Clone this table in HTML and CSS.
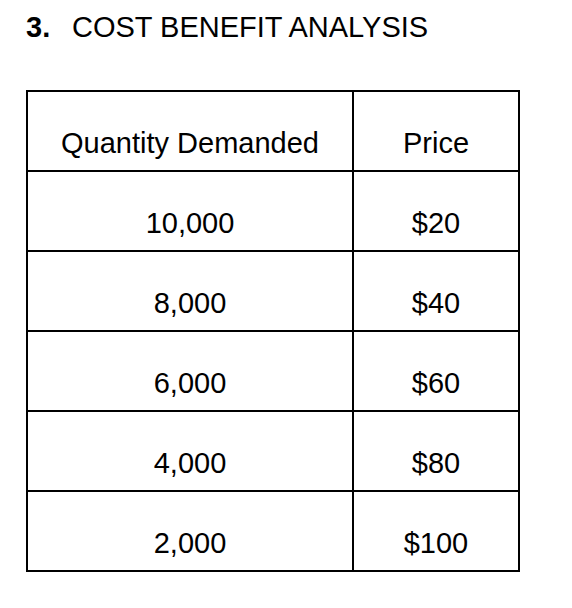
FILE: index.html
```html
<!DOCTYPE html>
<html lang="en">
<head>
<meta charset="utf-8">
<title>Cost Benefit Analysis</title>
<link rel="stylesheet" href="styles.css">
</head>
<body>
<div class="page">
  <h1 class="title"><span class="num">3.</span>COST BENEFIT ANALYSIS</h1>
  <table class="grid">
    <tr><td class="c1">Quantity Demanded</td><td class="c2">Price</td></tr>
    <tr><td class="c1">10,000</td><td class="c2">$20</td></tr>
    <tr><td class="c1">8,000</td><td class="c2">$40</td></tr>
    <tr><td class="c1">6,000</td><td class="c2">$60</td></tr>
    <tr><td class="c1">4,000</td><td class="c2">$80</td></tr>
    <tr><td class="c1">2,000</td><td class="c2">$100</td></tr>
  </table>
</div>
</body>
</html>
```

FILE: styles.css
```css
html, body {
  margin: 0;
  padding: 0;
  background: #ffffff;
}

body {
  font-family: "Liberation Sans", Arial, sans-serif;
  color: #000000;
  font-size: 29px;
}

.page {
  padding: 11px 0 0 26px;
}

.title {
  margin: 0;
  font-size: 29px;
  font-weight: normal;
  line-height: 32px;
  white-space: nowrap;
}

.num {
  display: inline-block;
  width: 46px;
  font-weight: bold;
}

.grid {
  margin-top: 47px;
  border-collapse: separate;
  border-spacing: 0;
  border: 2px solid #000000;
}

.grid td {
  padding: 35px 0 11px;
  line-height: 32px;
  text-align: center;
  vertical-align: top;
  border-top: 2px solid #000000;
}

.grid tr:first-child td {
  border-top: 0;
}

.grid td.c1 {
  width: 324px;
}

.grid td.c2 {
  width: 164px;
  border-left: 2px solid #000000;
}
```
